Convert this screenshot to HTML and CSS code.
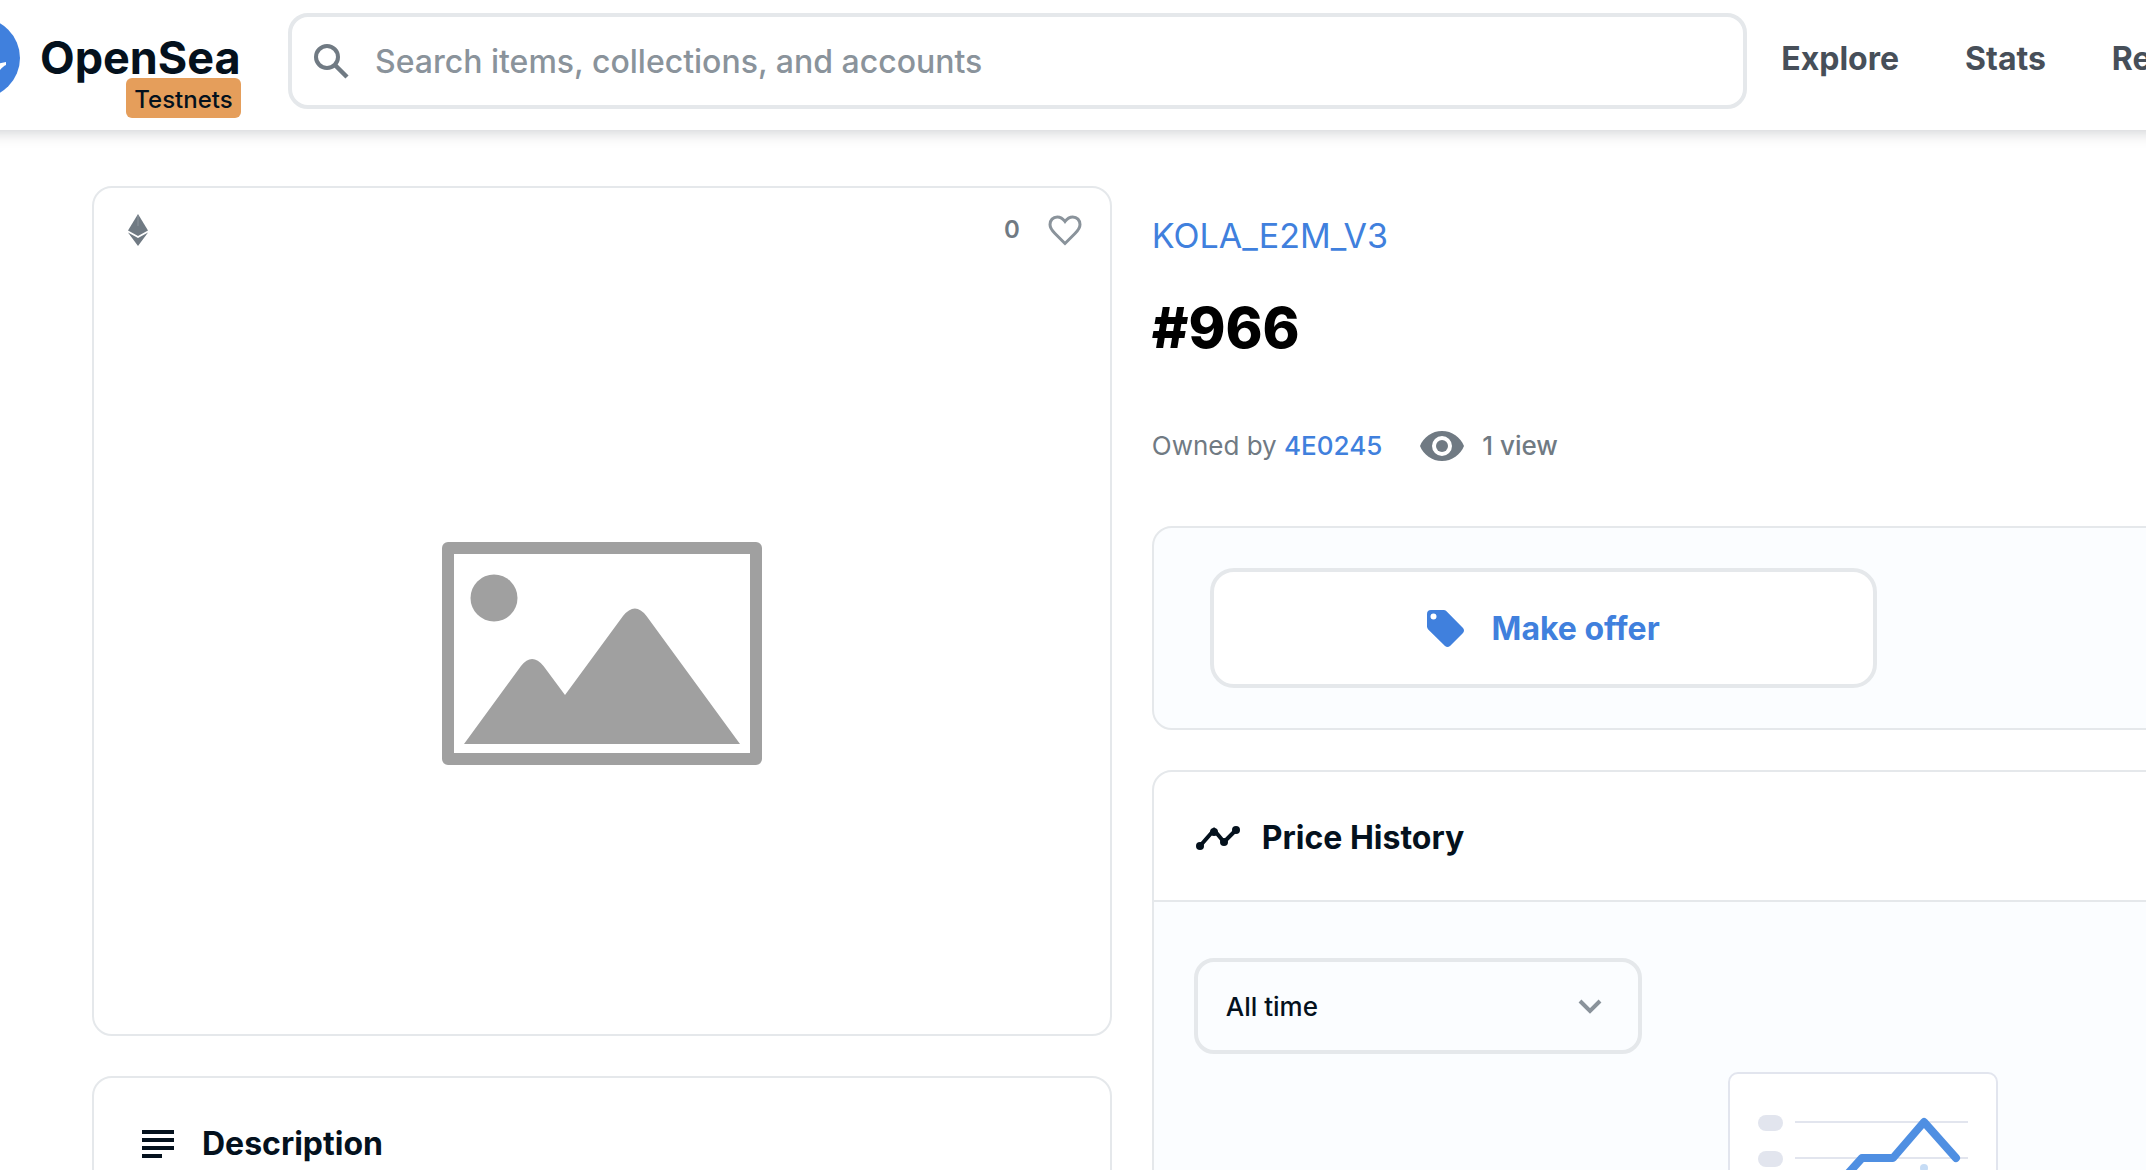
FILE: index.html
```html
<!DOCTYPE html>
<html lang="en">
<head>
    <meta charset="UTF-8">
    <meta name="viewport" content="width=device-width, initial-scale=1.0">
    <title>#966 - KOLA_E2M_V3 | OpenSea</title>
    <link rel="stylesheet" href="styles.css">
</head>
<body>
    <header class="header">
        <a class="brand" href="#">
            <svg class="brand-logo" viewBox="0 0 80 80" aria-hidden="true">
                <circle cx="40" cy="40" r="40" fill="#4080dd"/>
                <path d="M66 44v3c-2 1-4 2.500-6 5-3 4-6 9-12 9H25c-9 0-15-7-15-15h16v5h9v-6h8c6-5 7-11 3-19 6 4 8 12 6 21z" fill="#fff"/>
            </svg>
            <span class="brand-text">
                <span class="brand-name">OpenSea</span>
                <span class="brand-badge">Testnets</span>
            </span>
        </a>

        <form class="search" role="search">
            <label for="search" aria-label="Search">
                <svg class="search-icon" viewBox="0 0 36 36" aria-hidden="true">
                    <circle cx="14" cy="14" r="11" fill="none" stroke="#707a83" stroke-width="4"/>
                    <path d="M22 22l12 12" stroke="#707a83" stroke-width="4.500"/>
                </svg>
            </label>
            <input type="text" id="search" placeholder="Search items, collections, and accounts">
        </form>

        <nav class="nav">
            <a href="#">Explore</a>
            <a href="#">Stats</a>
            <a href="#">Resources</a>
        </nav>
    </header>

    <main class="item">
        <div class="column">
            <section class="card">
                <div class="media-bar">
                    <svg class="eth-icon" viewBox="0 0 20 32" aria-hidden="true">
                        <path d="M10 0L20 16.500 10 22 0 16.500z" fill="#707a83"/>
                        <path d="M0 18.500L10 24l10-5.500L10 32z" fill="#707a83"/>
                        <path d="M10 1v11" stroke="#8a939b" stroke-width="1"/>
                    </svg>
                    <div class="likes">
                        <span>0</span>
                        <button class="like-button" type="button" aria-label="Favorite">
                            <svg viewBox="0 0 34 31" aria-hidden="true">
                                <path d="M17 28.500L7 18.500C4 15.500 2 13 2 9.500 2 5.200 5 2 9.200 2c3.300 0 5.800 1.700 7.800 4.500C19 3.700 21.500 2 24.800 2 29 2 32 5.200 32 9.500c0 3.500-2 6-5 9z" fill="none" stroke="#8a939b" stroke-width="3"/>
                            </svg>
                        </button>
                    </div>
                </div>
                <div class="media">
                    <svg class="placeholder" viewBox="0 0 320 223" role="img" aria-label="No image">
                        <path fill-rule="evenodd" d="M6 0h308a6 6 0 0 1 6 6v211a6 6 0 0 1-6 6H6a6 6 0 0 1-6-6V6a6 6 0 0 1 6-6zM12 12v199h296V12z" fill="#a0a0a0"/>
                        <circle cx="52" cy="56" r="23.500" fill="#a0a0a0"/>
                        <path d="M22 202L79 124q11-14 22.500 0l21.500 29 58-79q12-15 23.500 0L298 202z" fill="#a0a0a0"/>
                    </svg>
                </div>
            </section>

            <section class="card">
                <h2 class="card-title">
                    <svg class="title-icon" viewBox="0 0 44 32" aria-hidden="true">
                        <path d="M6 2h32v4H6zM6 10h32v4H6zM6 18h32v4H6zM6 26h20v4H6z" fill="#04111d"/>
                    </svg>
                    Description
                </h2>
                <div class="card-body"></div>
            </section>
        </div>

        <div class="column">
            <section class="summary">
                <a class="collection" href="#">KOLA_E2M_V3</a>
                <h1>#966</h1>
                <div class="meta">
                    <span>Owned by <a href="#">4E0245</a></span>
                    <span class="views">
                        <svg class="eye-icon" viewBox="0 0 44 30" aria-hidden="true">
                            <path fill-rule="evenodd" d="M22 0C12 0 3.500 6.200 0 15c3.500 8.800 12 15 22 15s18.500-6.200 22-15C40.500 6.200 32 0 22 0zm0 25a10 10 0 1 1 0-20 10 10 0 0 1 0 20z" fill="#707a83"/>
                            <circle cx="22" cy="15" r="6" fill="#707a83"/>
                        </svg>
                        1 view
                    </span>
                </div>
            </section>

            <section class="card offer">
                <button class="offer-button" type="button">
                    <svg class="tag-icon" viewBox="0 0 37 37" aria-hidden="true">
                        <path fill-rule="evenodd" d="M36 18L19.500 1.200Q18.300 0 16.500 0H4Q0 0 0 4v12.500q0 1.700 1.200 2.900L18 36q2.500 2 5 0l13-13q2-2.500 0-5zM6.500 9.500a3 3 0 1 1 0-6 3 3 0 0 1 0 6z" fill="#4080dd"/>
                    </svg>
                    Make offer
                </button>
            </section>

            <section class="card">
                <h2 class="card-title">
                    <svg class="title-icon" viewBox="0 0 44 32" aria-hidden="true">
                        <path d="M4 24L18 8l10 12L40 8" fill="none" stroke="#04111d" stroke-width="4"/>
                        <circle cx="4" cy="24" r="4" fill="#04111d"/>
                        <circle cx="18" cy="10" r="4" fill="#04111d"/>
                        <circle cx="28" cy="20" r="4" fill="#04111d"/>
                        <circle cx="40" cy="8" r="4" fill="#04111d"/>
                    </svg>
                    Price History
                </h2>
                <div class="card-body">
                    <div class="range">
                        <select id="range" aria-label="Time range">
                            <option selected>All time</option>
                            <option>Last 7 days</option>
                            <option>Last 30 days</option>
                        </select>
                        <svg class="chevron" viewBox="0 0 24 15" aria-hidden="true">
                            <path d="M2 2l10 10L22 2" fill="none" stroke="#8a939b" stroke-width="4"/>
                        </svg>
                    </div>
                    <svg class="chart" viewBox="0 0 270 180" aria-hidden="true">
                        <rect x="1" y="1" width="268" height="178" rx="9" fill="#fff" stroke="#e2e5ee" stroke-width="2"/>
                        <g fill="#e2e5ee">
                            <rect x="30" y="43" width="25" height="16" rx="8"/>
                            <rect x="30" y="79" width="25" height="16" rx="8"/>
                            <rect x="30" y="115" width="25" height="16" rx="8"/>
                            <rect x="67" y="49" width="173" height="2"/>
                            <rect x="67" y="85" width="173" height="2"/>
                            <rect x="67" y="121" width="173" height="2"/>
                        </g>
                        <circle cx="196" cy="96" r="4" fill="#c6dcf5"/>
                        <path d="M98 126L134 86h31l31-36 32 36" fill="none" stroke="#4f8fe2" stroke-width="8" stroke-linecap="round" stroke-linejoin="round"/>
                    </svg>
                </div>
            </section>
        </div>
    </main>
</body>
</html>
```
FILE: styles.css
```css
* {
    box-sizing: border-box;
}
body {
    margin: 0;
    font-family: Inter, "Liberation Sans", sans-serif;
    font-size: 26px;
    line-height: 40px;
    color: #04111d;
    background-color: #fff;
    overflow: hidden;
}
a {
    color: #4080dd;
    text-decoration: none;
}
svg {
    display: block;
    flex: none;
}

/* Header, bleeds past both sides of the window */
.header {
    display: grid;
    grid-template-columns: 314px 68vw 1fr;
    column-gap: 34px;
    width: 120%;
    height: 130px;
    margin-left: -60px;
    padding-top: 13px;
    box-shadow: 0 0 16px rgba(4, 17, 29, 0.25);
}
.brand {
    display: flex;
    gap: 20px;
    padding-top: 5px;
    color: #04111d;
}
.brand-logo {
    width: 80px;
    height: 80px;
}
.brand-text {
    display: flex;
    flex-direction: column;
    align-items: flex-end;
    padding-top: 20px;
}
.brand-name {
    font-size: 45px;
    font-weight: 700;
}
.brand-badge {
    height: 40px;
    padding: 2px 8px 0;
    border-radius: 6px;
    background-color: #e59e5b;
    font-size: 24px;
    font-weight: 500;
}
.search {
    display: flex;
    align-items: center;
    gap: 26px;
    height: 96px;
    padding: 0 21px;
    border: 4px solid #e5e8eb;
    border-radius: 20px;
}
.search-icon {
    width: 36px;
    height: 36px;
}
.search input {
    flex: 1;
    padding: 0;
    border: none;
    outline: none;
    background: transparent;
    font-family: inherit;
    font-size: 32px;
    font-weight: 500;
    color: #04111d;
}
.search input::placeholder {
    color: #8a939b;
}
.nav {
    display: flex;
    align-items: center;
    gap: 66px;
    height: 92px;
}
.nav a {
    color: #474f59;
    font-size: 32px;
    font-weight: 700;
}

/* Item page, wider than the window */
.item {
    display: grid;
    grid-template-columns: 48fr 67fr;
    column-gap: 40px;
    width: 120%;
    padding: 56px 0 0 92px;
}
.column {
    display: flex;
    flex-direction: column;
    gap: 40px;
}
.card {
    border: 2px solid #e5e8eb;
    border-radius: 20px;
    overflow: hidden;
}
.card-title {
    display: flex;
    align-items: center;
    gap: 22px;
    margin: 0;
    padding: 46px 42px 42px;
    font-size: 32px;
    font-weight: 700;
}
.title-icon {
    width: 44px;
    height: 32px;
}
.card-body {
    min-height: 320px;
    padding: 56px 40px;
    border-top: 2px solid #e5e8eb;
    background-color: #fbfdff;
}

/* Media card */
.media-bar {
    display: flex;
    justify-content: space-between;
    align-items: center;
    height: 84px;
    padding: 0 26px 0 34px;
}
.eth-icon {
    width: 20px;
    height: 32px;
}
.likes {
    display: flex;
    align-items: center;
    gap: 28px;
    color: #707a83;
    font-size: 24px;
    font-weight: 600;
}
.like-button {
    width: 36px;
    padding: 0;
    border: none;
    background: none;
    cursor: pointer;
}
.like-button svg {
    width: 34px;
    height: 31px;
}
.media {
    display: flex;
    justify-content: center;
    align-items: center;
    min-height: 762px;
}
.placeholder {
    width: 320px;
    height: 223px;
}

/* Summary */
.summary {
    padding-top: 30px;
}
.collection {
    display: block;
    font-size: 34px;
}
h1 {
    margin: 36px 0 62px;
    font-size: 56px;
    line-height: 72px;
    font-weight: 800;
    color: #000;
}
.meta {
    display: flex;
    gap: 38px;
    margin-bottom: 20px;
    color: #707a83;
}
.meta a {
    font-weight: 500;
}
.views {
    display: flex;
    align-items: center;
    gap: 18px;
    font-weight: 500;
}
.eye-icon {
    width: 44px;
    height: 30px;
}

/* Offer */
.offer {
    padding: 40px 56px;
    background-color: #fbfdff;
}
.offer-button {
    display: flex;
    justify-content: center;
    align-items: center;
    gap: 28px;
    width: 51%;
    height: 120px;
    border: 4px solid #e5e8eb;
    border-radius: 24px;
    background-color: #fff;
    color: #4080dd;
    font-family: inherit;
    font-size: 32px;
    font-weight: 700;
    cursor: pointer;
}
.tag-icon {
    width: 37px;
    height: 37px;
}

/* Price history */
.range {
    position: relative;
    width: 448px;
}
.range select {
    appearance: none;
    display: block;
    width: 100%;
    height: 96px;
    padding: 0 28px;
    border: 4px solid #e5e8eb;
    border-radius: 20px;
    background-color: transparent;
    color: #04111d;
    font-family: inherit;
    font-size: 26px;
    font-weight: 500;
}
.chevron {
    position: absolute;
    top: 41px;
    right: 40px;
    width: 24px;
    height: 15px;
    pointer-events: none;
}
.chart {
    width: 270px;
    height: 180px;
    margin: 18px auto 0;
}
```
